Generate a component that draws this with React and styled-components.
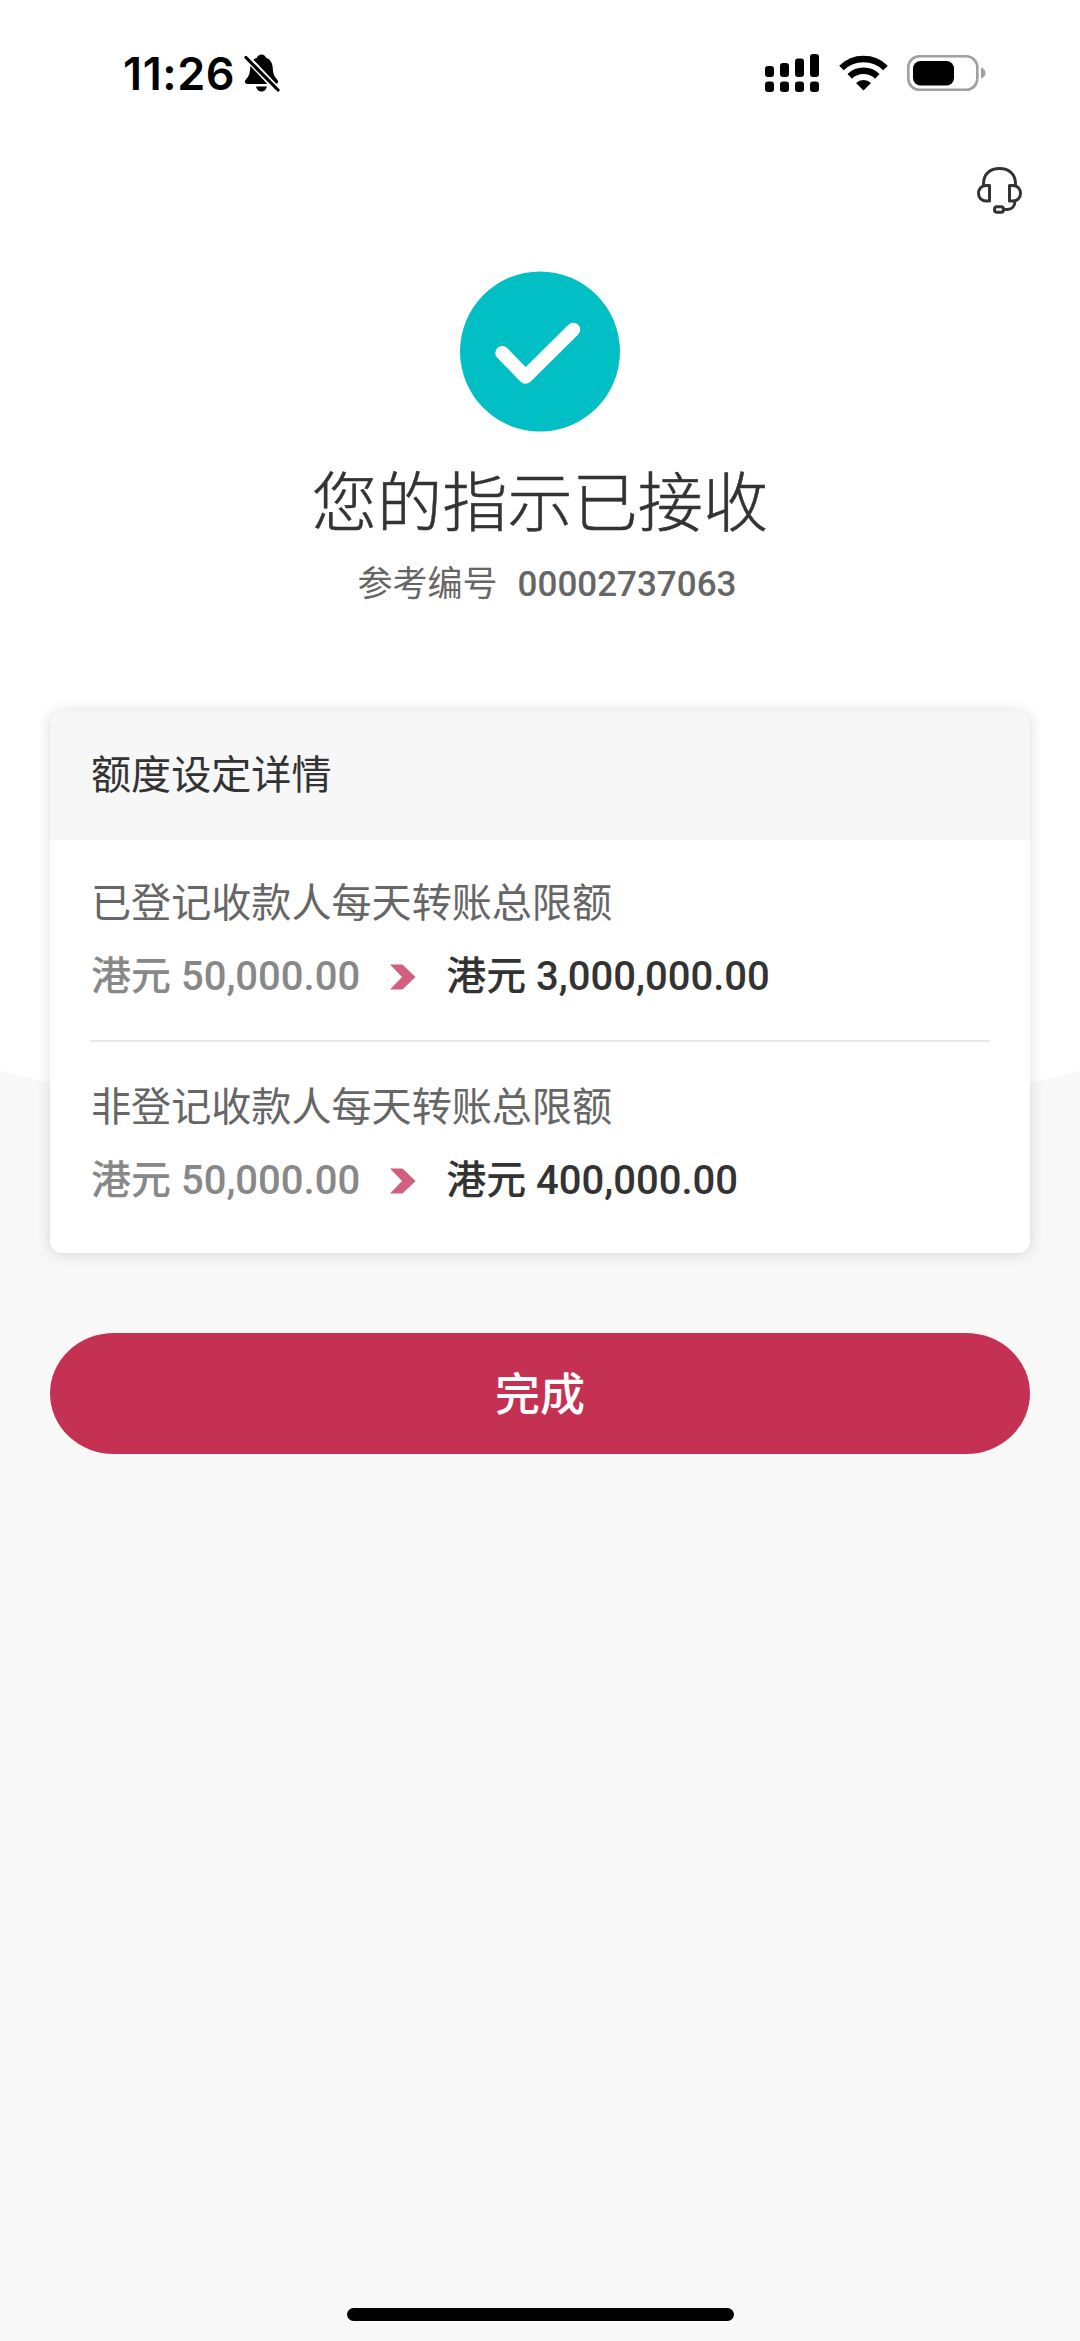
import styled, { createGlobalStyle } from "styled-components";

const GlobalStyle = createGlobalStyle`
  * {
    box-sizing: border-box;
  }

  body {
    margin: 0;
    background: #f8f8f8;
    font-family: Roboto, "Noto Sans CJK SC", sans-serif;
    color: #333;
  }
`;

/* white upper area ends in a wide arc behind the card */
const Page = styled.div`
  width: 1080px;
  height: 2341px;
  display: flex;
  flex-direction: column;
  background: radial-gradient(circle at 540px -931px, #fff 2072.5px, #f8f8f8 2073.5px);
`;

const StatusBar = styled.div`
  height: 148px;
  padding: 0 94px 3px 123px;
  display: flex;
  align-items: center;
  justify-content: space-between;
`;

const StatusGroup = styled.div`
  display: flex;
  align-items: center;
  gap: ${({ $gap }) => $gap}px;
`;

const Clock = styled.span`
  padding-top: 2px;
  font: 600 45px/1 Inter, sans-serif;
  letter-spacing: 0.6px;
  color: #000;
`;

const NavBar = styled.div`
  height: 86px;
  padding: 18px 57px 0 0;
  display: flex;
  justify-content: flex-end;
`;

const Result = styled.div`
  padding-top: 37px;
  display: flex;
  flex-direction: column;
  align-items: center;
`;

const ResultTitle = styled.h1`
  margin: 24px 0 0;
  font-size: 65.2px;
  font-weight: 300;
  line-height: 96px;
  -webkit-text-stroke: 0.5px #333;
`;

const Reference = styled.p`
  margin: 7px 0 0;
  padding-left: 14px;
  display: flex;
  gap: 20px;
  font-size: 35px;
  line-height: 52px;
  color: #666;
`;

const ReferenceNo = styled.span`
  font-weight: 500;
`;

const Card = styled.section`
  width: 980px;
  height: 542px;
  margin: 100px auto 0;
  border-radius: 12px;
  overflow: hidden;
  background: #fff;
  box-shadow: 0 1px 14px rgba(0, 0, 0, 0.15);
`;

const CardHeader = styled.h2`
  height: 129px;
  margin: 0;
  padding: 0 41px;
  background: #f7f7f7;
  font-size: 40.1px;
  font-weight: 400;
  line-height: 129px;
`;

const LimitRow = styled.div`
  height: 200px;
  margin: 0 40px;
  padding-top: 34px;

  & + & {
    border-top: 2px solid #e8e8e8;
    padding-top: 36px;
  }
`;

const LimitName = styled.p`
  margin: 0;
  padding-left: 1px;
  font-size: 40.1px;
  line-height: 60px;
  color: #666;
`;

const LimitChange = styled.div`
  margin-top: 13px;
  padding-left: 1px;
  display: flex;
  align-items: center;
  font-size: 40px;
  line-height: 60px;
`;

const Amount = styled.span`
  font-weight: 500;
  color: ${({ $old }) => ($old ? "#888" : "#333")};
`;

const Arrow = styled.svg`
  margin: 0 30px;
`;

const DoneButton = styled.button`
  width: 980px;
  height: 121px;
  margin: 80px auto 0;
  padding: 0 0 5px;
  border: 0;
  border-radius: 64px / 60.5px;
  background: #c53152;
  color: #fff;
  font-family: inherit;
  font-size: 45px;
  font-weight: 500;
`;

const HomeIndicator = styled.div`
  width: 387px;
  height: 13px;
  margin: auto auto 20px;
  border-radius: 7px;
  background: #000;
`;

const limits = [
  { name: "已登记收款人每天转账总限额", from: "50,000.00", to: "3,000,000.00" },
  { name: "非登记收款人每天转账总限额", from: "50,000.00", to: "400,000.00" },
];

const MutedBell = () => (
  <svg width="36" height="40" viewBox="0 0 36 40">
    <path
      d="M17.5 1.5c-2.300 0-4 1.300-4.500 3.200C8.400 6.300 6.500 10 6.200 15.500 5.900 21 4.600 23.500 2 26.300c-1.900 2.200-1.300 4.700 1.500 4.700h28c2.800 0 3.400-2.500 1.500-4.700-2.600-2.800-3.900-5.300-4.200-10.800C28.500 10 26.600 6.300 22 4.700 21.500 2.800 19.800 1.500 17.500 1.500z"
      fill="#000"
    />
    <path d="M12 33.500h11c-.6 3-2.700 5-5.500 5s-4.900-2-5.500-5z" fill="#000" />
    <path d="M0 1.500L34.500 38" stroke="#fff" strokeWidth="6.500" />
    <path d="M2 4.500L34 37" stroke="#000" strokeWidth="3.200" strokeLinecap="round" />
  </svg>
);

const Signal = () => (
  <svg width="55" height="38" viewBox="0 0 55 38">
    <rect x="0" y="12" width="9" height="11" rx="3" />
    <rect x="15" y="9" width="9" height="14" rx="3" />
    <rect x="30" y="4.500" width="9" height="18.500" rx="3" />
    <rect x="45" y="0" width="9" height="23" rx="3" />
    <rect x="0" y="27.500" width="9" height="10.500" rx="3" />
    <rect x="15" y="27.500" width="9" height="10.500" rx="3" />
    <rect x="30" y="27.500" width="9" height="10.500" rx="3" />
    <rect x="45" y="27.500" width="9" height="10.500" rx="3" />
  </svg>
);

const Wifi = () => (
  <svg width="49" height="36" viewBox="0 0 49 36">
    <path d="M2.500 13a31.500 31.500 0 0 1 44 0" fill="none" stroke="#000" strokeWidth="6.500" />
    <path d="M10.700 21.300a20 20 0 0 1 27.600 0" fill="none" stroke="#000" strokeWidth="6.500" />
    <path d="M24.500 35.500L17 28a11 11 0 0 1 15 0z" />
  </svg>
);

const Battery = () => (
  <svg width="79" height="36" viewBox="0 0 79 36">
    <rect x="1.300" y="1.300" width="69" height="33.400" rx="11" fill="none" stroke="#a0a0a0" strokeWidth="2.600" />
    <rect x="6" y="6" width="41" height="24.500" rx="7.500" />
    <path d="M74 12.500c3 1 4.500 3 4.500 5.500s-1.500 4.500-4.500 5.500z" fill="#a0a0a0" />
  </svg>
);

const Headset = () => (
  <svg width="48" height="48" viewBox="0 0 48 48" fill="none" stroke="#333" strokeWidth="3" strokeLinejoin="round">
    <path d="M8.500 19v-1C8.500 7.500 15.500 2.500 24.500 2.500s16 5 16 15.500v1" />
    <path d="M14.500 19.500v15.500h-3.500c-4.500 0-7.500-3.500-7.500-7.700s3-7.800 7.500-7.800z" />
    <path d="M34.500 19.500v15.500h3.500c4.500 0 7.500-3.500 7.500-7.700s-3-7.800-7.500-7.800z" />
    <path d="M40 35c0 5.500-3.500 8.500-7.500 8.500h-3.500" />
    <rect x="19.500" y="40.700" width="9" height="5.500" rx="2.500" />
  </svg>
);

const SuccessMark = () => (
  <svg width="160" height="161" viewBox="0 0 161 161">
    <circle cx="80.500" cy="80.500" r="80.500" fill="#02bec5" />
    <path
      d="M42.500 82l23.500 24L114 58.500"
      fill="none"
      stroke="#fff"
      strokeWidth="14"
      strokeLinecap="round"
      strokeLinejoin="round"
    />
  </svg>
);

const LimitItem = ({ name, from, to }) => (
  <LimitRow>
    <LimitName>{name}</LimitName>
    <LimitChange>
      <Amount $old>港元 {from}</Amount>
      <Arrow width="26" height="26" viewBox="0 0 26 26">
        <path d="M0 .5h12.500L25.500 13 12.500 25.500H0L12 13z" fill="#d0607e" />
      </Arrow>
      <Amount>港元 {to}</Amount>
    </LimitChange>
  </LimitRow>
);

const App = () => {
  return (
    <Page>
      <GlobalStyle />
      <StatusBar>
        <StatusGroup $gap={9}>
          <Clock>11:26</Clock>
          <MutedBell />
        </StatusGroup>
        <StatusGroup $gap={19}>
          <Signal />
          <Wifi />
          <Battery />
        </StatusGroup>
      </StatusBar>
      <NavBar>
        <Headset />
      </NavBar>
      <Result>
        <SuccessMark />
        <ResultTitle>您的指示已接收</ResultTitle>
        <Reference>
          <span>参考编号</span>
          <ReferenceNo>00002737063</ReferenceNo>
        </Reference>
      </Result>
      <Card>
        <CardHeader>额度设定详情</CardHeader>
        {limits.map((limit) => (
          <LimitItem key={limit.name} {...limit} />
        ))}
      </Card>
      <DoneButton>完成</DoneButton>
      <HomeIndicator />
    </Page>
  );
};

export default App;
